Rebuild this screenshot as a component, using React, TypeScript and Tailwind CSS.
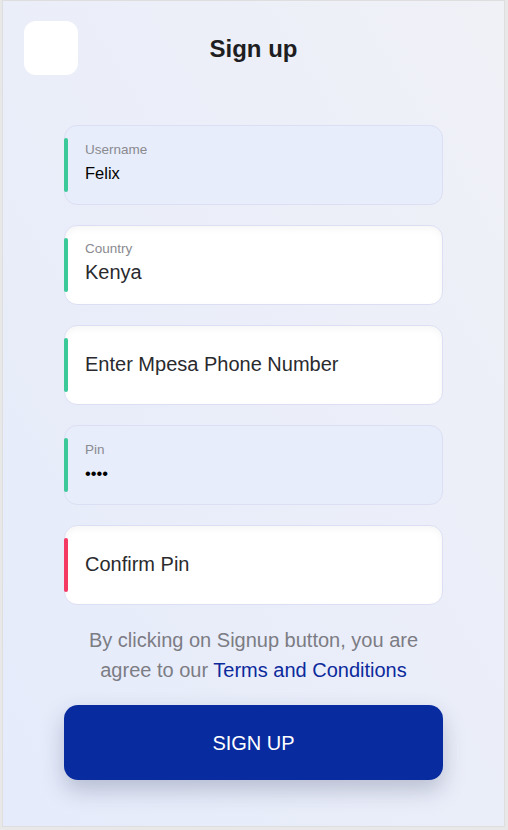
import React from "react";

type FieldProps = {
  label?: string;
  value: string;
  filled?: boolean;
  accent: "ok" | "bad";
  big?: boolean;
};

function Field({ label, value, filled, accent, big }: FieldProps) {
  return (
    <div
      className={`relative h-[80px] rounded-[13px] border border-[#dcdff3] flex flex-col justify-center pl-[20px] ${
        filled ? "bg-[#e7edfb]" : "bg-white shadow-[inset_0_3px_6px_rgba(0,0,0,0.04)]"
      }`}
    >
      <div
        className={`absolute left-[-1px] top-[12px] bottom-[12px] w-[4px] rounded-[2px] ${
          accent === "ok" ? "bg-[#3cc99a]" : "bg-[#f43a63]"
        }`}
      />
      {label && (
        <div className="text-[13.5px] leading-[16px] text-[#8a8a8f] mt-[-5px]">{label}</div>
      )}
      <div
        className={
          big
            ? `text-[20px] leading-[24px] text-[#2a2a2e] ${label ? "mt-[3px]" : "mt-[-3px]"}`
            : "text-[16.5px] leading-[20px] text-black mt-[5px]"
        }
      >
        {value}
      </div>
    </div>
  );
}

export default function App() {
  return (
    <div className="h-[830px] w-[508px] bg-[#e8e8e8] font-['Liberation_Sans',Arial,sans-serif]">
      <div className="ml-[2px] h-[827px] w-[503px] border border-[#dedede] bg-linear-to-bl from-[#f0f1f7] to-[#e5ebfb] flex flex-col">
        <div className="relative h-[96px] flex items-center justify-center">
          <div className="absolute left-[21px] top-[20px] w-[54px] h-[54px] rounded-[12px] bg-white" />
          <h1 className="text-[24px] font-bold text-[#1e1e22] mt-[-1px]">Sign up</h1>
        </div>
        <div className="px-[61px] pt-[28px] flex flex-col gap-[20px]">
          <Field label="Username" value="Felix" filled accent="ok" />
          <Field label="Country" value="Kenya" accent="ok" big />
          <Field value="Enter Mpesa Phone Number" accent="ok" big />
          <Field label="Pin" value="••••" filled accent="ok" />
          <Field value="Confirm Pin" accent="bad" big />
        </div>
        <p className="mt-[20px] px-[66px] text-center text-[20px] leading-[30px] text-[#7c7c84]">
          By clicking on Signup button, you are agree to our{" "}
          <span className="text-[#0c2a9c]">Terms and Conditions</span>
        </p>
        <div className="px-[61px] mt-[20px]">
          <button className="w-full h-[75px] rounded-[14px] bg-[#082ca0] text-white text-[20px] shadow-[0_10px_22px_rgba(40,50,90,0.25)]">
            SIGN UP
          </button>
        </div>
      </div>
    </div>
  );
}
